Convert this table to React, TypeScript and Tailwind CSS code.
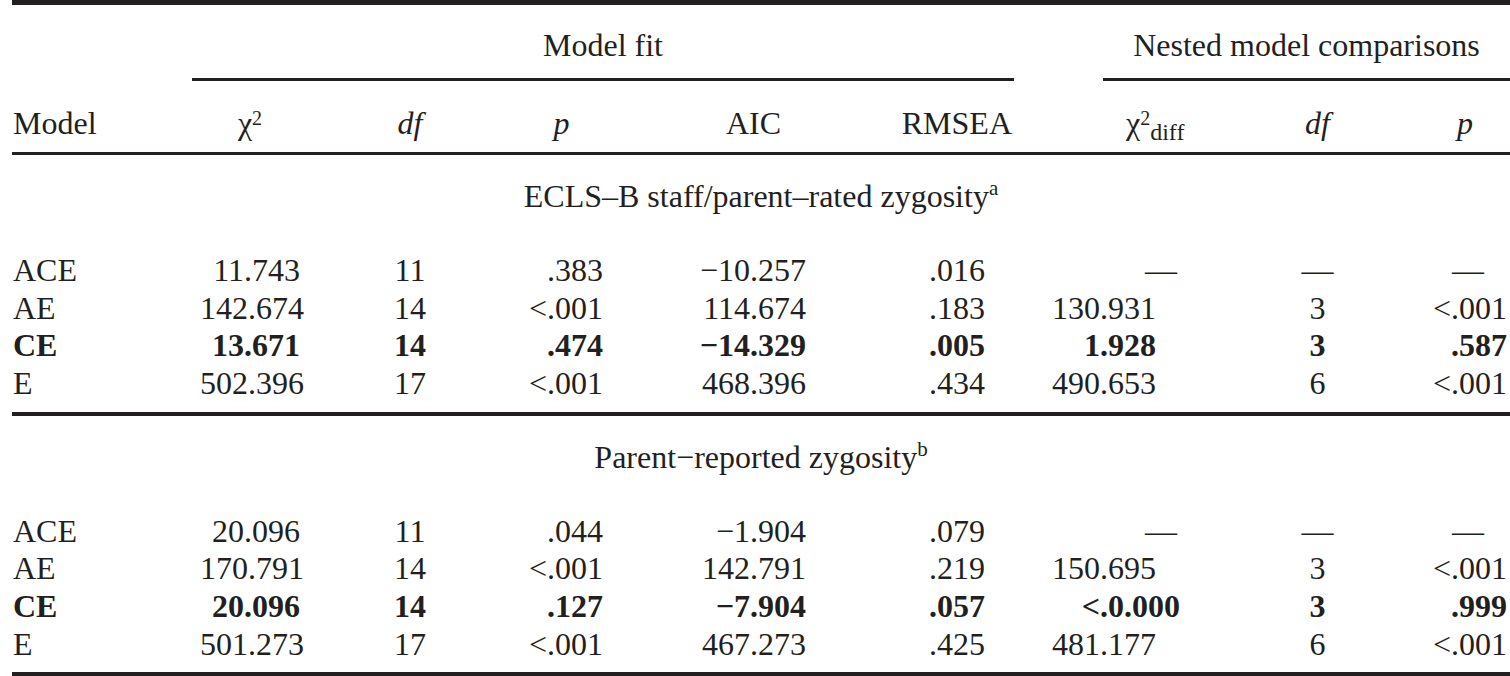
import React from "react";

type Row = {
  model: string;
  chi: string;
  df: string;
  p: string;
  aic: string;
  rmsea: string;
  chiDiff: string;
  dfDiff: string;
  pDiff: string;
  bold?: boolean;
};

const ecls: Row[] = [
  { model: "ACE", chi: "11.743", df: "11", p: ".383", aic: "−10.257", rmsea: ".016", chiDiff: "—", dfDiff: "—", pDiff: "—" },
  { model: "AE", chi: "142.674", df: "14", p: "<.001", aic: "114.674", rmsea: ".183", chiDiff: "130.931", dfDiff: "3", pDiff: "<.001" },
  { model: "CE", chi: "13.671", df: "14", p: ".474", aic: "−14.329", rmsea: ".005", chiDiff: "1.928", dfDiff: "3", pDiff: ".587", bold: true },
  { model: "E", chi: "502.396", df: "17", p: "<.001", aic: "468.396", rmsea: ".434", chiDiff: "490.653", dfDiff: "6", pDiff: "<.001" },
];

const parent: Row[] = [
  { model: "ACE", chi: "20.096", df: "11", p: ".044", aic: "−1.904", rmsea: ".079", chiDiff: "—", dfDiff: "—", pDiff: "—" },
  { model: "AE", chi: "170.791", df: "14", p: "<.001", aic: "142.791", rmsea: ".219", chiDiff: "150.695", dfDiff: "3", pDiff: "<.001" },
  { model: "CE", chi: "20.096", df: "14", p: ".127", aic: "−7.904", rmsea: ".057", chiDiff: "<.0.000", dfDiff: "3", pDiff: ".999", bold: true },
  { model: "E", chi: "501.273", df: "17", p: "<.001", aic: "467.273", rmsea: ".425", chiDiff: "481.177", dfDiff: "6", pDiff: "<.001" },
];

const cols = "grid grid-cols-[188px_100px_220px_83px_203px_206px_203px_205px_90px]";

function chiDiffPad(v: string) {
  if (v === "—") return "text-right pr-[38px]";
  if (v.startsWith("<")) return "text-right pr-[35px]";
  return "text-right pr-[59px]";
}

function DataRow({ row }: { row: Row }) {
  return (
    <div className={`${cols} leading-[37.67px] whitespace-nowrap ${row.bold ? "font-bold" : ""}`}>
      <div className="pl-px">{row.model}</div>
      <div className="text-right">{row.chi}</div>
      <div className="text-center">{row.df}</div>
      <div className="text-right">{row.p}</div>
      <div className="text-right">{row.aic}</div>
      <div className="text-right pr-[27px]">{row.rmsea}</div>
      <div className={chiDiffPad(row.chiDiff)}>{row.chiDiff}</div>
      <div className="text-center">{row.dfDiff}</div>
      <div className={row.pDiff === "—" ? "text-right pr-[26px]" : "text-right pr-[3px]"}>{row.pDiff}</div>
    </div>
  );
}

function Section({ title, note, rows }: { title: string; note: string; rows: Row[] }) {
  return (
    <div className="border-b-4 border-[#231f20] pt-[23px] pb-[9px]">
      <div className="text-center leading-[36px] mb-[38px]">
        {title}
        <sup className="text-[21px] -top-[12px]">{note}</sup>
      </div>
      {rows.map((r) => (
        <DataRow key={r.model} row={r} />
      ))}
    </div>
  );
}

export default function App() {
  return (
    <div className="w-[1510px] h-[676px] overflow-hidden bg-white text-[#231f20] font-['Liberation_Serif',serif] text-[32px]">
      <div className="ml-[12px] w-[1498px] border-t-[5px] border-[#231f20]">
        <div className="flex pt-[22px] leading-[36px] whitespace-nowrap">
          <div className="w-[180px]" />
          <div className="w-[822px] text-center pb-[15px] border-b-[3px] border-[#231f20]">Model fit</div>
          <div className="w-[89px]" />
          <div className="w-[407px] text-center pb-[15px] border-b-[3px] border-[#231f20]">
            Nested model comparisons
          </div>
        </div>

        <div className={`${cols} pt-[24px] pb-[11px] leading-[36px] whitespace-nowrap border-b-[3px] border-[#231f20]`}>
          <div className="pl-px">Model</div>
          <div className="text-center">
            χ<sup className="text-[20px] -top-[9px]">2</sup>
          </div>
          <div className="text-center italic">df</div>
          <div className="text-center italic">p</div>
          <div className="text-right pr-[25px]">AIC</div>
          <div className="text-right">RMSEA</div>
          <div className="pl-[114px]">
            χ<sup className="text-[20px] -top-[9px]">2</sup>
            <sub className="text-[24px] -bottom-[6px]">diff</sub>
          </div>
          <div className="text-center italic">df</div>
          <div className="text-center italic">p</div>
        </div>

        <Section title="ECLS–B staff/parent–rated zygosity" note="a" rows={ecls} />
        <Section title="Parent−reported zygosity" note="b" rows={parent} />
      </div>
    </div>
  );
}
